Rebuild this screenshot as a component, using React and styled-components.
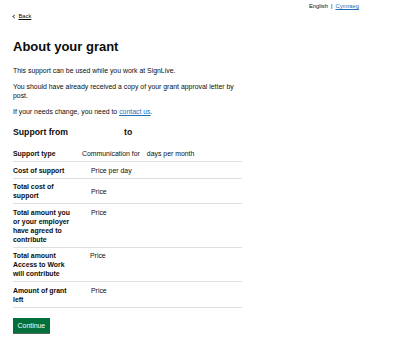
import React from 'react';
import styled, { createGlobalStyle } from 'styled-components';

const GlobalStyle = createGlobalStyle`
  html, body {
    margin: 0;
    padding: 0;
    background: #ffffff;
  }
  body {
    font-family: "Liberation Sans", Arial, sans-serif;
    color: #0b0c0c;
  }
`;

const Page = styled.div`
  width: 416px;
  min-height: 348px;
  display: flex;
  flex-direction: column;
`;

const LanguageBar = styled.div`
  display: flex;
  justify-content: flex-end;
  align-items: center;
  gap: 3px;
  padding: 3px 57px 0 0;
  font-size: 5.8px;
  line-height: 7px;
`;

const Divider = styled.span`
  color: #0b0c0c;
`;

const Link = styled.a`
  color: #1d70b8;
  text-decoration: underline;
  text-underline-offset: 0.5px;
  text-decoration-thickness: 0.5px;
`;

const Main = styled.main`
  width: 229px;
  padding: 0 13px;
  display: flex;
  flex-direction: column;
`;

const BackLink = styled.a`
  margin-top: 3px;
  display: flex;
  align-items: center;
  gap: 2.5px;
  font-size: 5.8px;
  line-height: 7px;
  color: #0b0c0c;
  text-decoration: none;

  span {
    text-decoration: underline;
    text-decoration-thickness: 0.5px;
  }
`;

const Chevron = styled.i`
  display: inline-block;
  width: 2px;
  height: 2px;
  border-left: 0.7px solid #505a5f;
  border-bottom: 0.7px solid #505a5f;
  transform: rotate(45deg);
`;

const Heading = styled.h1`
  margin: 19.5px 0 0;
  font-size: 13px;
  line-height: 14.5px;
  font-weight: 700;
`;

const Body = styled.p`
  margin: ${(p) => p.$top || 7.2}px 0 0;
  font-size: 6.9px;
  line-height: 9.05px;
`;

const SubHeading = styled.h2`
  margin: 11px 0 0;
  font-size: 8.7px;
  line-height: 10.9px;
  font-weight: 700;
  display: flex;
`;

const Gap = styled.span`
  display: inline-block;
  width: 56px;
`;

const Table = styled.table`
  margin-top: 7.8px;
  width: 229px;
  border-collapse: collapse;
  font-size: 6.9px;
  line-height: 9.05px;
`;

const Row = styled.tr`
  border-bottom: 1px solid #dedfe0;
`;

const Key = styled.th`
  width: 60px;
  padding: 3.2px 9px 3.2px 0;
  text-align: left;
  vertical-align: top;
  font-weight: 700;
`;

const Value = styled.td`
  padding: 3.2px 0 3.2px ${(p) => (p.$indent === undefined ? 9 : p.$indent)}px;
  text-align: left;
  vertical-align: ${(p) => (p.$middle ? 'middle' : 'top')};
  font-weight: 400;
`;

const Spaced = styled.span`
  margin-right: 7px;
`;

const Button = styled.button`
  margin-top: 10px;
  align-self: flex-start;
  padding: 2.9px 3.6px 2.5px;
  background: #00703c;
  color: #ffffff;
  border: 0.7px solid transparent;
  border-radius: 0;
  box-shadow: 0 0.7px 0 #002d18;
  font-family: "Liberation Sans", Arial, sans-serif;
  font-size: 6.9px;
  line-height: 8px;
  cursor: pointer;
`;

const rows = [
  { key: 'Cost of support', value: 'Price per day' },
  { key: 'Total cost of support', value: 'Price', middle: true },
  { key: 'Total amount you or your employer have agreed to contribute', value: 'Price' },
  { key: 'Total amount Access to Work will contribute', value: 'Price', indent: 8 },
  { key: 'Amount of grant left', value: 'Price' },
];

export default function App() {
  return (
    <Page>
      <GlobalStyle />
      <LanguageBar>
        <span>English</span>
        <Divider>|</Divider>
        <Link href="#">Cymraeg</Link>
      </LanguageBar>
      <Main>
        <BackLink href="#">
          <Chevron />
          <span>Back</span>
        </BackLink>
        <Heading>About your grant</Heading>
        <Body $top={11.8}>This support can be used while you work at SignLive.</Body>
        <Body>You should have already received a copy of your grant approval letter by post.</Body>
        <Body>
          If your needs change, you need to <Link href="#">contact us</Link>.
        </Body>
        <SubHeading>
          Support from <Gap /> to
        </SubHeading>
        <Table>
          <tbody>
            <Row>
              <Key>Support type</Key>
              <Value $indent={0}>
                <Spaced>Communication for</Spaced>days per month
              </Value>
            </Row>
            {rows.map((r) => (
              <Row key={r.key}>
                <Key>{r.key}</Key>
                <Value $middle={r.middle} $indent={r.indent}>
                  {r.value}
                </Value>
              </Row>
            ))}
          </tbody>
        </Table>
        <Button>Continue</Button>
      </Main>
    </Page>
  );
}
